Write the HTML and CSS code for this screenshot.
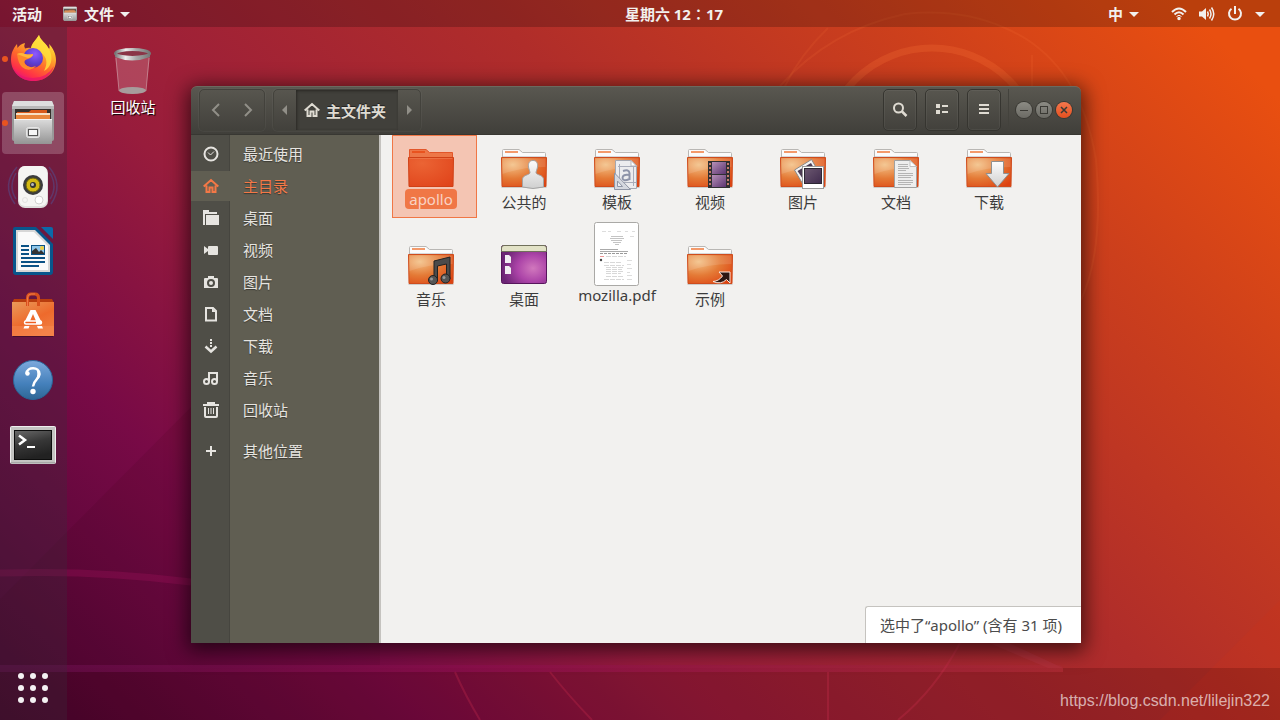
FILE: index.html
```html
<!DOCTYPE html>
<html lang="zh-CN">
<head>
    <meta charset="utf-8">
    <meta name="viewport" content="width=device-width, initial-scale=1">
    <title>主文件夹</title>
    <link rel="stylesheet" href="styles.css">
</head>
<body>
    <!-- Wallpaper lines -->
    <svg class="wallpaper" viewBox="0 0 1280 720" preserveAspectRatio="none" aria-hidden="true">
        <defs>
            <linearGradient id="band" x1="0" x2="1">
                <stop offset="0" stop-color="#5f0c46"/>
                <stop offset=".45" stop-color="#8d0f4e"/>
                <stop offset="1" stop-color="#ad2b34"/>
            </linearGradient>
        </defs>
        <path d="M380 217L-120 720H1280V668H380Z" fill="#200" opacity=".08"/>
        <path d="M0 668H1280V720H0Z" fill="#300" opacity=".12"/>
        <path d="M1280 600L1160 720H1280Z" fill="#f30" opacity=".06"/>
        <path d="M0 573Q100 570 191 582" fill="none" stroke="#9a1058" stroke-width="7" opacity=".35"/>
        <path d="M0 665H1060L1063 668V672H0Z" fill="url(#band)" opacity=".75"/>
        <path d="M985 632L1063 668H1048L975 637Z" fill="#b0303a" opacity=".8"/>
        <g fill="none" stroke="#ff7a3a">
            <circle cx="932" cy="157" r="109" stroke-width="7" opacity=".22"/>
            <path d="M780 86Q830 30 905 14Q960 8 1005 28Q1080 60 1096 160Q1104 250 1081 300" stroke-width="2" opacity=".13"/>
            <path d="M828 28Q800 55 785 86M1032 55V86" stroke-width="2" opacity=".12"/>
        </g>
        <g fill="none" stroke="#d03050" stroke-width="2" opacity=".28">
            <path d="M960 643Q935 690 898 720"/>
            <path d="M455 672Q465 695 480 720M550 672Q568 695 592 720"/>
            <path d="M828 672V720"/>
        </g>
    </svg>

    <!-- Shared folder artwork -->
    <svg class="defs" width="0" height="0" aria-hidden="true">
        <defs>
            <radialGradient id="folderFront" cx=".25" cy=".25" r=".95">
                <stop offset="0" stop-color="#f3c085"/>
                <stop offset=".5" stop-color="#e47a36"/>
                <stop offset="1" stop-color="#dd4211"/>
            </radialGradient>
            <radialGradient id="folderSelected" cx=".3" cy=".2" r="1">
                <stop offset="0" stop-color="#eb6434"/>
                <stop offset="1" stop-color="#e0431a"/>
            </radialGradient>
            <linearGradient id="paper" x1="0" y1="0" x2="0" y2="1">
                <stop offset="0" stop-color="#fdfdfd"/>
                <stop offset="1" stop-color="#cfcfcf"/>
            </linearGradient>
            <linearGradient id="metal" x1="0" y1="0" x2="0" y2="1">
                <stop offset="0" stop-color="#dcdcdc"/>
                <stop offset=".5" stop-color="#b8b8b8"/>
                <stop offset="1" stop-color="#949494"/>
            </linearGradient>
            <linearGradient id="film" x1="0" y1="0" x2="1" y2="1">
                <stop offset="0" stop-color="#b690b8"/>
                <stop offset="1" stop-color="#5b3470"/>
            </linearGradient>
            <symbol id="folder" viewBox="0 0 48 42">
                <path d="M1.500 41.500h45" stroke="#000" stroke-width="2" opacity=".15"/>
                <path d="M2.500 14V4.500Q2.500 3.500 3.500 3.500H19L22.500 6.500H44.500Q45.500 6.500 45.500 7.500V14Z" fill="#fbfbfb" stroke="#b9b7b4"/>
                <path d="M3 10.500H45" stroke="#d6d8da"/>
                <rect x="5" y="5" width="13" height="2" fill="#f39a6b"/>
                <path d="M1.500 11.500H46.500L46 40.500H2Z" fill="url(#folderFront)" stroke="#cf4c1d"/>
                <path d="M2.500 12.500H45.500V21Q22 21 2.500 28Z" fill="#fff" opacity=".12"/>
            </symbol>
            <symbol id="home" viewBox="0 0 16 16">
                <path d="M0.700 8.500L8 2L15.300 8.500M3.500 7.500V14H6.500V9.500H9.500V14H12.500V7.500" fill="none" stroke="currentColor" stroke-width="2"/>
            </symbol>
            <symbol id="cabinet" viewBox="0 0 48 48">
                <path d="M5 2H43L45 7V40Q45 42 43 42H5Q3 42 3 40V7Z" fill="#999"/>
                <path d="M5 2H43L45 7H3Z" fill="#dedede"/>
                <rect x="3" y="7" width="42" height="3" fill="#b8b8b8"/>
                <rect x="6" y="10" width="36" height="10" fill="#35302c"/>
                <path d="M8 13H20L22 11H38V14H8Z" fill="#d95b1b"/>
                <rect x="7" y="14" width="34" height="3" fill="#f7e0c4"/>
                <rect x="7" y="16" width="34" height="4" fill="#e9873c"/>
                <rect x="5" y="20" width="38" height="25" rx="1" fill="url(#metal)"/>
                <path d="M5 20.500H43" stroke="#f4f4f4"/>
                <rect x="17.500" y="28.500" width="13" height="10" rx="2" fill="#ccc" stroke="#e6e6e6"/>
                <rect x="19.500" y="30.500" width="9" height="6" fill="#f5f5f5" stroke="#555"/>
            </symbol>
        </defs>
    </svg>

    <!-- Top bar -->
    <header class="topbar">
        <div class="topbar-side">
            <button class="topbar-item" type="button">活动</button>
            <button class="topbar-item app-menu" type="button">
                <svg width="16" height="16"><use href="#cabinet"/></svg>
                文件
                <span class="caret"></span>
            </button>
        </div>
        <button class="topbar-item clock" type="button">星期六 12∶17</button>
        <div class="topbar-side topbar-right">
            <button class="topbar-item input-menu" type="button">中 <span class="caret"></span></button>
            <button class="topbar-item system-menu" type="button" aria-label="系统菜单">
                <svg width="16" height="16" viewBox="0 0 16 16" fill="none" stroke="#f2f0ee" stroke-width="2">
                    <path d="M1 6Q8 -1 15 6"/><path d="M3.500 8.500Q8 4 12.500 8.500"/><path d="M5.500 10.500Q8 8 10.500 10.500" stroke-width="1"/>
                    <circle cx="8" cy="12.500" r="1" fill="#f2f0ee" stroke-width="1.500"/>
                </svg>
                <svg width="16" height="16" viewBox="0 0 16 16" fill="none" stroke="#f2f0ee" stroke-width="1.500">
                    <path d="M0 5.500H3L7 2V14L3 10.500H0Z" fill="#f2f0ee" stroke="none"/>
                    <path d="M8.500 5.500Q10 8 8.500 10.500M10.500 3.500Q13.500 8 10.500 12.500M12.500 1.500Q17 8 12.500 14.500"/>
                </svg>
                <svg width="16" height="16" viewBox="0 0 16 16" fill="none" stroke="#f2f0ee" stroke-width="2">
                    <path d="M4.500 2.700A6 6 0 1 0 11.500 2.700M8 0V8"/>
                </svg>
                <span class="caret"></span>
            </button>
        </div>
    </header>

    <div class="desktop">
        <!-- Dock -->
        <nav class="dock" aria-label="Dock">
            <button class="dock-item running" type="button" aria-label="Firefox">
                <svg width="48" height="48" viewBox="0 0 48 48">
                    <defs>
                        <linearGradient id="ff" x1=".85" y1="0" x2=".3" y2="1">
                            <stop offset="0" stop-color="#fff44f"/>
                            <stop offset=".3" stop-color="#ffbd2b"/>
                            <stop offset=".6" stop-color="#ff6a2b"/>
                            <stop offset=".85" stop-color="#ff3048"/>
                            <stop offset="1" stop-color="#e5157b"/>
                        </linearGradient>
                        <radialGradient id="ffGlobe" cx=".6" cy=".3" r=".8">
                            <stop offset="0" stop-color="#9059ff"/>
                            <stop offset=".6" stop-color="#5b3fd0"/>
                            <stop offset="1" stop-color="#722291"/>
                        </radialGradient>
                    </defs>
                    <path d="M30 0C31 5 37 8 40 14C41 13 40.500 11 40 9C44 13 47 19 47 25C47 37 37 46 24.500 46C12 46 2 37 2 24.500C2 18 4 14 8 9L8.500 13Q11 9 16 8Q14.500 11 16 13.500Q19 12.500 22 13C23 8 27 5 30 0Z" fill="url(#ff)"/>
                    <path d="M30 0C31 5 37 8 40 14C45 23 42 33 35 36C39 28 38 22 32 18C28 15 23 15 22 13C23 8 27 5 30 0Z" fill="#ffe23d" opacity=".8"/>
                    <circle cx="24" cy="23" r="10" fill="url(#ffGlobe)"/>
                    <path d="M8 19Q12 17 16 19Q20 20 24 19Q24 22 19 24Q14 25 16 29Q20 34 27 31Q20 38 13 32Q9 28 8 19Z" fill="#ff8a2a"/>
                    <path d="M8 19Q12 17 16 19Q20 20 24 19Q24 22 19 23Q13 21 8 19Z" fill="#ffb83a"/>
                    <path d="M3 30Q8 43 24 43Q38 43 45 31Q40 46 24.500 46Q8 46 3 30Z" fill="#e8146c" opacity=".7"/>
                </svg>
            </button>
            <button class="dock-item running active" type="button" aria-label="文件">
                <svg width="48" height="48"><use href="#cabinet"/></svg>
            </button>
            <button class="dock-item" type="button" aria-label="Rhythmbox">
                <svg width="48" height="48" viewBox="0 0 48 48">
                    <g fill="none" stroke="#4a5fa8" stroke-width="1.500" opacity=".4">
                        <path d="M8 4Q-8 22 6 41M7 10Q-1 24 7 36M40 4Q55 22 42 41M41 10Q49 24 41 36"/>
                    </g>
                    <rect x="9" y="3" width="30" height="42" rx="7" fill="#dededc"/>
                    <rect x="10" y="3" width="28" height="40" rx="6" fill="#f5f5f3"/>
                    <circle cx="24" cy="22" r="10" fill="#3b3c3d"/>
                    <circle cx="24" cy="22" r="7" fill="#d3b913" stroke="#66600f"/>
                    <circle cx="24" cy="22" r="3" fill="#333"/>
                    <circle cx="23.500" cy="21.500" r="1.500" fill="#bbb"/>
                    <circle cx="30" cy="37" r="4" fill="#fff" stroke="#d2d2d0"/>
                    <circle cx="16" cy="37" r="2.500" fill="none" stroke="#e2e2e0"/>
                </svg>
            </button>
            <button class="dock-item" type="button" aria-label="LibreOffice Writer">
                <svg width="48" height="48" viewBox="0 0 48 48">
                    <path d="M32 0H42Q44 0 44 2V12Z" fill="#0b6aa8"/>
                    <path d="M6 0H27L44 17V45Q44 48 41 48H7Q4 48 4 45V2Q4 0 6 0Z" fill="#08568c"/>
                    <path d="M7 3H26L41 18V45H7Z" fill="#d7d7d7"/>
                    <path d="M9 5H25L39 19V43H9Z" fill="#fafafa"/>
                    <path d="M12 19H20M12 23H20M12 27H20M12 31H36M12 35H36M12 39H30" stroke="#0b5285" stroke-width="2"/>
                    <rect x="22" y="18" width="14" height="10" fill="#0b5285"/>
                    <rect x="23" y="19" width="12" height="8" fill="#8fc7ea"/>
                    <circle cx="33" cy="21" r="2" fill="#f0cf3e"/>
                    <path d="M23 27V24L27 21L30 25L32 23L35 26V27Z" fill="#333"/>
                </svg>
            </button>
            <button class="dock-item" type="button" aria-label="Ubuntu 软件">
                <svg width="48" height="48" viewBox="0 0 48 48">
                    <defs>
                        <linearGradient id="bag" x1="0" y1="0" x2=".6" y2="1">
                            <stop offset="0" stop-color="#e99a5a"/>
                            <stop offset=".6" stop-color="#ee6a2c"/>
                            <stop offset="1" stop-color="#f07c40"/>
                        </linearGradient>
                    </defs>
                    <path d="M5 8H43L45 12H3Z" fill="#b83c0e"/>
                    <path d="M3 11H45V45H3Z" fill="url(#bag)"/>
                    <path d="M3 35H45V45H3Z" fill="#f58a52" opacity=".5"/>
                    <path d="M4 45.500H44" stroke="#000" opacity=".3"/>
                    <path d="M18.500 15V7Q18.500 3 22 3H26Q29.500 3 29.500 7V15" fill="none" stroke="#d9501c" stroke-width="3"/>
                    <path d="M18.500 15V7Q18.500 3 22 3H26" fill="none" stroke="#ef7b47" stroke-width="1"/>
                    <path d="M21.500 19H26.500L32 30H27L24 23L21 30H16Z" fill="#fff"/>
                    <rect x="15.500" y="30" width="17" height="3" rx="1.500" fill="#ef5d20" stroke="#fff" stroke-width="1.500"/>
                    <path d="M27 31.500H32.500" stroke="#fff" stroke-width="3"/>
                    <path d="M15.500 35H20.500L19.500 37.500H14.500ZM28 35H33L34 37.500H29Z" fill="#fff"/>
                </svg>
            </button>
            <button class="dock-item" type="button" aria-label="帮助">
                <svg width="48" height="48" viewBox="0 0 48 48">
                    <defs>
                        <linearGradient id="help" x1="0" y1="0" x2="0" y2="1">
                            <stop offset="0" stop-color="#7da9dc"/>
                            <stop offset=".6" stop-color="#4480bb"/>
                            <stop offset="1" stop-color="#2e6795"/>
                        </linearGradient>
                    </defs>
                    <circle cx="24" cy="26" r="19" fill="#000" opacity=".2"/>
                    <circle cx="24" cy="25" r="19.500" fill="url(#help)" stroke="#2a6598"/>
                    <path d="M17.500 18.500C18 11.500 30.500 11.500 30.500 19C30.500 24 24.500 25 24 31.500" fill="none" stroke="#fff" stroke-width="2.500"/>
                    <path d="M29 15Q33 19 30 23L26 27Q29 21 28 16Z" fill="#fff"/>
                    <circle cx="18.500" cy="18.500" r="2.200" fill="#fff"/>
                    <circle cx="24" cy="36.500" r="2.700" fill="#fff"/>
                </svg>
            </button>
            <button class="dock-item" type="button" aria-label="终端">
                <svg width="48" height="48" viewBox="0 0 48 48">
                    <defs>
                        <linearGradient id="term" x1="0" y1="0" x2=".3" y2="1">
                            <stop offset="0" stop-color="#686868"/>
                            <stop offset=".5" stop-color="#383838"/>
                            <stop offset="1" stop-color="#222"/>
                        </linearGradient>
                    </defs>
                    <rect x="1.500" y="7.500" width="45" height="37" rx="1" fill="#c4c4c2" stroke="#eee"/>
                    <path d="M2 44H46" stroke="#8d8d8d"/>
                    <rect x="5" y="11" width="38" height="30" fill="#0d0d0d"/>
                    <rect x="6" y="12" width="36" height="28" fill="url(#term)"/>
                    <path d="M10 16.500L16 21L10 25.500" fill="none" stroke="#fff" stroke-width="2.500"/>
                    <path d="M18 28H26" stroke="#fff" stroke-width="2"/>
                </svg>
            </button>
            <button class="dock-item show-apps" type="button" aria-label="显示应用程序">
                <svg width="48" height="48" viewBox="0 0 48 48" fill="#f4f1f3">
                    <circle cx="12" cy="12" r="3"/><circle cx="24" cy="12" r="3"/><circle cx="36" cy="12" r="3"/>
                    <circle cx="12" cy="24" r="3"/><circle cx="24" cy="24" r="3"/><circle cx="36" cy="24" r="3"/>
                    <circle cx="12" cy="36" r="3"/><circle cx="24" cy="36" r="3"/><circle cx="36" cy="36" r="3"/>
                </svg>
            </button>
        </nav>

        <main class="workspace">
            <button class="desktop-icon" type="button">
                <svg width="48" height="48" viewBox="0 0 48 48">
                    <defs>
                        <linearGradient id="rim" x1="0" x2="1">
                            <stop offset="0" stop-color="#777"/>
                            <stop offset=".3" stop-color="#eee"/>
                            <stop offset=".6" stop-color="#aaa"/>
                            <stop offset="1" stop-color="#777"/>
                        </linearGradient>
                    </defs>
                    <path d="M6 8H41L37 43Q24 48 10 43Z" fill="#e8b0bb" opacity=".26"/>
                    <path d="M7 10L10 43M40 10L37 43" stroke="#d8b9be" stroke-width="1" opacity=".5"/>
                    <ellipse cx="23.500" cy="42.500" rx="13.500" ry="3.500" fill="#a79c9c"/>
                    <ellipse cx="23.500" cy="5.500" rx="17" ry="4" fill="#8a3547" stroke="url(#rim)" stroke-width="3"/>
                    <path d="M6 6V9Q23 16 41 9V6Q23 13 6 6Z" fill="url(#rim)"/>
                </svg>
                <span>回收站</span>
            </button>

            <!-- File manager window -->
            <section class="window">
                <div class="titlebar">
                    <div class="group nav-group">
                        <button type="button" aria-label="后退"><svg width="16" height="16" viewBox="0 0 16 16"><path d="M11 2L5 8L11 14" fill="none" stroke="currentColor" stroke-width="2"/></svg></button>
                        <button type="button" aria-label="前进"><svg width="16" height="16" viewBox="0 0 16 16"><path d="M5 2L11 8L5 14" fill="none" stroke="currentColor" stroke-width="2"/></svg></button>
                    </div>
                    <div class="group path-bar">
                        <button class="path-arrow" type="button" aria-label="向左"><svg width="8" height="10" viewBox="0 0 8 10"><path d="M6 0V10L1 5Z" fill="currentColor"/></svg></button>
                        <button class="path-current" type="button"><svg width="16" height="16"><use href="#home"/></svg>主文件夹</button>
                        <button class="path-arrow" type="button" aria-label="向右"><svg width="8" height="10" viewBox="0 0 8 10"><path d="M2 0V10L7 5Z" fill="currentColor"/></svg></button>
                    </div>
                    <div class="actions">
                        <button class="tool" type="button" aria-label="搜索"><svg width="16" height="16" viewBox="0 0 16 16" fill="none" stroke="currentColor"><circle cx="6.500" cy="6" r="4.500" stroke-width="2"/><path d="M10 9.500L14.500 14" stroke-width="2.500"/></svg></button>
                        <button class="tool" type="button" aria-label="视图"><svg width="16" height="16" viewBox="0 0 16 16" fill="currentColor"><path d="M2 2H6V6H2ZM2 8H6V12H2ZM8 3H14V5H8ZM8 9H14V11H8Z"/></svg></button>
                        <button class="tool" type="button" aria-label="菜单"><svg width="16" height="16" viewBox="0 0 16 16" fill="currentColor"><path d="M3 2H13V4H3ZM3 6H13V8H3ZM3 10H13V12H3Z"/></svg></button>
                    </div>
                    <div class="window-controls">
                        <button type="button" aria-label="最小化"><svg width="16" height="16" viewBox="0 0 16 16"><path d="M4 8.500H12" stroke="currentColor"/></svg></button>
                        <button type="button" aria-label="最大化"><svg width="16" height="16" viewBox="0 0 16 16"><rect x="4.500" y="4.500" width="7" height="7" fill="none" stroke="currentColor"/></svg></button>
                        <button class="close" type="button" aria-label="关闭"><svg width="16" height="16" viewBox="0 0 16 16"><path d="M5 5L11 11M11 5L5 11" stroke="currentColor" stroke-width="1.500"/></svg></button>
                    </div>
                </div>

                <div class="window-body">
                    <nav class="sidebar" aria-label="位置">
                        <a href="#"><svg width="16" height="16" viewBox="0 0 16 16"><circle cx="8" cy="8" r="6.500" fill="none" stroke="currentColor" stroke-width="2"/><path d="M5 6.500L7.500 9L11 5.500" fill="none" stroke="currentColor" stroke-width="1"/></svg><span>最近使用</span></a>
                        <a href="#" class="current"><svg width="16" height="16"><use href="#home"/></svg><span>主目录</span></a>
                        <a href="#"><svg width="16" height="16" viewBox="0 0 16 16" fill="currentColor"><path d="M0 0H6V2H14V4H2V15H0ZM3 5H16V15H3Z"/></svg><span>桌面</span></a>
                        <a href="#"><svg width="16" height="16" viewBox="0 0 16 16" fill="currentColor"><path d="M1 4L5 7V9L1 12Z"/><rect x="5" y="4" width="10" height="9" rx="1"/></svg><span>视频</span></a>
                        <a href="#"><svg width="16" height="16" viewBox="0 0 16 16" fill="currentColor"><path fill-rule="evenodd" d="M5 2H11V4H14Q15 4 15 5V14H1V5Q1 4 2 4H5ZM8 5A4 4 0 1 0 8 13A4 4 0 1 0 8 5Z"/><circle cx="8" cy="9" r="2"/></svg><span>图片</span></a>
                        <a href="#"><svg width="16" height="16" viewBox="0 0 16 16"><path d="M3 2H10L13 5V14.500H3Z" fill="none" stroke="currentColor" stroke-width="2"/><path d="M9 2V6H13Z" fill="currentColor"/></svg><span>文档</span></a>
                        <a href="#"><svg width="16" height="16" viewBox="0 0 16 16" fill="none" stroke="currentColor"><path d="M8 1V3M8 4V6M8 7V9" stroke-width="2"/><path d="M2.500 8.500L8 13.500L13.500 8.500" stroke-width="2.500"/></svg><span>下载</span></a>
                        <a href="#"><svg width="16" height="16" viewBox="0 0 16 16" fill="none" stroke="currentColor" stroke-width="2"><circle cx="3.500" cy="11.500" r="2.500"/><circle cx="11.500" cy="11.500" r="2.500"/><path d="M6 11V3H14V11"/></svg><span>音乐</span></a>
                        <a href="#"><svg width="16" height="16" viewBox="0 0 16 16" fill="none" stroke="currentColor"><path d="M0 3H16" stroke-width="2"/><path d="M4 1H12" stroke-width="2"/><path d="M2 5V14Q2 15 3 15H13Q14 15 14 14V5" stroke-width="2"/><path d="M5.500 6V12M8 6V12M10.500 6V12" stroke-width="1"/></svg><span>回收站</span></a>
                        <a href="#" class="other"><svg width="16" height="16" viewBox="0 0 16 16"><path d="M8 3V13M3 8H13" stroke="currentColor" stroke-width="2"/></svg><span>其他位置</span></a>
                    </nav>

                    <div class="content">
                        <div class="files">
                            <button class="file selected" type="button">
                                <svg width="48" height="42" viewBox="0 0 48 42">
                                    <path d="M2.500 14V3.500H19L22.500 6.500H45.500V14Z" fill="#ed7748" stroke="#e2562a"/>
                                    <rect x="5" y="5" width="13" height="2" fill="#e9531f"/>
                                    <path d="M1.500 11.500H46.500L46 40.500H2Z" fill="url(#folderSelected)" stroke="#cf4016"/>
                                    <path d="M2.500 12.500H45.500" stroke="#ef8055" opacity=".6"/>
                                </svg>
                                <span class="label latin">apollo</span>
                            </button>
                            <button class="file" type="button">
                                <svg width="48" height="42" viewBox="0 0 48 42">
                                    <use href="#folder"/>
                                    <path d="M33 14.500C37 14.500 38 18 37.500 21C37 24 36 25 36 27C37 29 43 29 43.500 33V41Q33 44 22.500 41V33C23 29 29 29 30 27C30 25 29 24 28.500 21C28 18 29 14.500 33 14.500Z" fill="url(#paper)" stroke="#a3a3a3"/>
                                </svg>
                                <span class="label">公共的</span>
                            </button>
                            <button class="file" type="button">
                                <svg width="48" height="42" viewBox="0 0 48 42">
                                    <use href="#folder"/>
                                    <path d="M22.500 14.500H38L43.500 20V42.500H22.500Z" fill="#ececee" stroke="#a4a7b0"/>
                                    <path d="M38 14.500V20H43.500Z" fill="#fff" stroke="#b5b7bd"/>
                                    <path d="M25 20.500H43M25 36.500H43M26.500 18V40M40.500 20V40" stroke="#a9adba"/>
                                    <path d="M30 25Q36 23 36.500 27V34M36.500 29Q29.500 28 29.500 32Q30 36 36.500 33" fill="none" stroke="#8d93a8" stroke-width="2"/>
                                    <path d="M21.500 27L37.500 43.500H21.500Z" fill="#d5d8df" stroke="#8f95a5"/>
                                    <path d="M24.500 35L29.500 40.500H24.500Z" fill="#eceef2" stroke="#8f95a5"/>
                                </svg>
                                <span class="label">模板</span>
                            </button>
                            <button class="file" type="button">
                                <svg width="48" height="42" viewBox="0 0 48 42">
                                    <use href="#folder"/>
                                    <rect x="22" y="15" width="22" height="27" fill="#2f2f31"/>
                                    <rect x="26" y="16" width="14" height="12" fill="url(#film)"/>
                                    <rect x="26" y="29" width="14" height="12" fill="url(#film)"/>
                                    <path d="M24 17V41M42 17V41" stroke="#c47b6c" stroke-width="2" stroke-dasharray="2 2"/>
                                </svg>
                                <span class="label">视频</span>
                            </button>
                            <button class="file" type="button">
                                <svg width="48" height="42" viewBox="0 0 48 42">
                                    <use href="#folder"/>
                                    <path d="M15.500 24L32.500 13.500L42 30L25 40Z" fill="#f3f3f3" stroke="#898989"/>
                                    <path d="M18.500 25L32 17L39 29L26 36Z" fill="#4c3b52"/>
                                    <rect x="23.500" y="20.500" width="21" height="22" fill="#fff" stroke="#999"/>
                                    <rect x="25" y="22" width="18" height="16" fill="#2c2733"/>
                                    <rect x="26" y="23" width="16" height="14" fill="url(#film)" opacity=".45"/>
                                </svg>
                                <span class="label">图片</span>
                            </button>
                            <button class="file" type="button">
                                <svg width="48" height="42" viewBox="0 0 48 42">
                                    <use href="#folder"/>
                                    <path d="M22.500 14.500H38L44.500 21V41.500H22.500Z" fill="#eee" stroke="#a1a1a1"/>
                                    <path d="M38 14.500V20.500H44.500Z" fill="#fff" stroke="#c2c2c2"/>
                                    <path d="M26 18.500H36M26 20.500H36M26 22.500H37M26 24.500H34M26 27.500H41M26 29.500H41M26 31.500H39M26 34.500H41M26 36.500H41M26 38.500H39" stroke="#b4b4b4"/>
                                </svg>
                                <span class="label">文档</span>
                            </button>
                            <button class="file" type="button">
                                <svg width="48" height="42" viewBox="0 0 48 42">
                                    <use href="#folder"/>
                                    <path d="M26.500 15.500H38.500V27.500H44L32.500 41L21 27.500H26.500Z" fill="url(#paper)" stroke="#909090"/>
                                </svg>
                                <span class="label">下载</span>
                            </button>
                            <button class="file" type="button">
                                <svg width="48" height="42" viewBox="0 0 48 42">
                                    <use href="#folder"/>
                                    <path d="M27 18L43 14V36H39.500V21L30.500 23V38H27Z" fill="#4b4b4b" stroke="#222"/>
                                    <circle cx="26" cy="37" r="4.500" fill="#555" stroke="#222"/>
                                    <circle cx="38.500" cy="35.500" r="4.500" fill="#555" stroke="#222"/>
                                    <circle cx="24.500" cy="36" r="1.500" fill="#999"/>
                                    <circle cx="37" cy="34.500" r="1.500" fill="#999"/>
                                </svg>
                                <span class="label">音乐</span>
                            </button>
                            <button class="file" type="button">
                                <svg width="48" height="42" viewBox="0 0 48 42">
                                    <defs>
                                        <radialGradient id="desk" cx=".7" cy=".6" r=".7">
                                            <stop offset="0" stop-color="#d178bd"/>
                                            <stop offset=".5" stop-color="#ac44a8"/>
                                            <stop offset="1" stop-color="#6b2474"/>
                                        </radialGradient>
                                    </defs>
                                    <rect x="1.500" y="2.500" width="45" height="38" rx="2" fill="url(#desk)" stroke="#57155c"/>
                                    <path d="M1.500 8.500V5Q1.500 2.500 4 2.500H44Q46.500 2.500 46.500 5V8.500Z" fill="#e2e2c6" stroke="#70705a"/>
                                    <path d="M5 12H9L11 14V20H5ZM5 23H9L11 25V31H5Z" fill="#f2eef2"/>
                                </svg>
                                <span class="label">桌面</span>
                            </button>
                            <button class="file document" type="button">
                                <svg width="46" height="64" viewBox="0 0 46 64">
                                    <rect x=".5" y=".5" width="44" height="63" rx="2" fill="#fff" stroke="#aaa9a6"/>
                                    <g fill="none" stroke="#c4c4c4" stroke-width="1">
                                        <path d="M8 9.500H12M14 9.500H17M23 9.500H27M31 9.500H34M38 9.500H41" stroke="#ddd"/>
                                        <path d="M17 14.500H29M16 16.500H30M17 18.500H28M19 20.500H27M21 22.500H25"/>
                                        <path d="M6 27.500H24M6 29.500H34" stroke="#aaa"/>
                                        <path d="M6 31.500H33" stroke="#999" stroke-dasharray="3 1"/>
                                        <path d="M6 34.500H10" stroke="#e99"/>
                                        <path d="M12 34.500H32M10 40.500H28M10 43.500H30M12 45.500H29M12 47.500H28M12 49.500H29M12 51.500H27M12 54.500H29M10 57.500H30" stroke="#d8d8d8" stroke-dasharray="5 1"/>
                                        <path d="M33 38.500H38M33 42.500H37M33 46.500H38M33 50.500H36M33 53.500H38M33 57.500H38" stroke="#ddd"/>
                                        <path d="M36 14.500H40" stroke="#ddd"/>
                                    </g>
                                    <circle cx="7" cy="38" r="1.200" fill="#444"/>
                                </svg>
                                <span class="label latin">mozilla.pdf</span>
                            </button>
                            <button class="file" type="button">
                                <svg width="48" height="42" viewBox="0 0 48 42">
                                    <use href="#folder"/>
                                    <path d="M33 29H44V40L40.500 36.500Q35 42 27 38.500Q33 38 36.500 33Z" fill="#2b1712" stroke="#fbe8df"/>
                                </svg>
                                <span class="label">示例</span>
                            </button>
                        </div>
                        <div class="status">选中了“apollo” (含有 31 项)</div>
                    </div>
                </div>
            </section>

            <p class="watermark">https://blog.csdn.net/lilejin322</p>
        </main>
    </div>
</body>
</html>
```
FILE: styles.css
```css
/* General Reset */
* {
    margin: 0;
    padding: 0;
    box-sizing: border-box;
}

body {
    font-family: "Noto Sans", "Noto Sans CJK SC", sans-serif;
    font-size: 15px;
    color: #3c3c3c;
    background: linear-gradient(45deg, #46042f 0%, #780a46 21%, #981c3c 36%, #b02d2a 60%, #cc3f1c 79%, #e94f10 95%);
    display: flex;
    flex-direction: column;
    min-height: 100vh;
    overflow: hidden;
    position: relative;
}

button {
    font: inherit;
    color: inherit;
    background: none;
    border: none;
}

svg {
    display: block;
    flex-shrink: 0;
    overflow: visible;
}

.wallpaper {
    position: absolute;
    inset: 0;
    width: 100%;
    height: 100%;
    z-index: -1;
}

.defs {
    position: absolute;
}

/* Top bar */
.topbar {
    display: grid;
    grid-template-columns: 1fr auto 1fr;
    height: 27px;
    padding: 0 15px 0 12px;
    background: rgba(0, 0, 0, 0.2);
    color: #f2f0ee;
    font-weight: 700;
}

.topbar-side {
    display: flex;
    gap: 20px;
}

.topbar-right {
    justify-content: flex-end;
    gap: 32px;
}

.topbar-item {
    display: flex;
    align-items: center;
    gap: 6px;
    line-height: 28px;
    white-space: nowrap;
}

.system-menu {
    gap: 12px;
}

.topbar .clock {
    margin-left: 71px;
}

.caret {
    border: 5px solid transparent;
    border-top-color: #f2f0ee;
    border-bottom: 0;
}

/* Desktop */
.desktop {
    display: flex;
    flex: 1;
}

.dock {
    width: 67px;
    padding: 1px 3px 1px 2px;
    display: flex;
    flex-direction: column;
    gap: 2px;
    background: rgba(60, 45, 60, 0.32);
}

.dock-item {
    display: flex;
    justify-content: center;
    align-items: center;
    width: 62px;
    height: 62px;
    border-radius: 4px;
    position: relative;
}

.dock-item.active {
    background: rgba(255, 255, 255, 0.2);
}

.dock-item.running::before {
    content: '';
    position: absolute;
    left: 0;
    top: 28px;
    width: 6px;
    height: 6px;
    border-radius: 50%;
    background: #e95420;
}

.show-apps {
    margin-top: auto;
}

.workspace {
    flex: 1;
    position: relative;
}

.desktop-icon {
    display: flex;
    flex-direction: column;
    align-items: center;
    margin: 21px 0 0 16px;
    width: 100px;
    color: #fff;
    text-shadow: 1px 1px 1px #000;
}

/* Window */
.window {
    position: absolute;
    top: 59px;
    left: 124px;
    right: 199px;
    bottom: 77px;
    display: flex;
    flex-direction: column;
    border-radius: 6px 6px 0 0;
    box-shadow: 0 4px 20px 4px rgba(0, 0, 0, 0.6);
}

.titlebar {
    display: flex;
    align-items: center;
    height: 49px;
    padding: 0 9px 1px 8px;
    background: linear-gradient(#595750, #403f3a);
    border-top: 1px solid #6b6a5f;
    border-bottom: 1px solid #383732;
    border-radius: 6px 6px 0 0;
    color: #dfdbd2;
}

.group {
    display: flex;
    height: 42px;
    border: 1px solid #43423c;
    border-radius: 5px;
    margin-right: 8px;
    box-shadow: 0 0 0 1px rgba(255, 255, 255, 0.04);
}

.group button {
    display: flex;
    align-items: center;
    justify-content: center;
}

.nav-group {
    color: #918f88;
}

.nav-group button {
    width: 32px;
}

.path-bar .path-arrow {
    width: 22px;
    color: #918f88;
}

.path-bar .path-current {
    justify-content: flex-start;
    gap: 6px;
    width: 102px;
    padding-left: 8px;
    font-weight: 700;
    background: #41403b;
    box-shadow: inset 1px 1px 3px #292824;
    text-shadow: 0 -1px 0 #222;
}

.actions {
    display: flex;
    gap: 8px;
    margin-left: auto;
    padding-right: 7px;
    border-right: 1px solid #43423c;
}

.tool {
    display: flex;
    align-items: center;
    justify-content: center;
    width: 34px;
    height: 42px;
    border: 1px solid #363530;
    border-radius: 5px;
    box-shadow: inset 0 0 0 1px rgba(255, 255, 255, 0.05);
}

.window-controls {
    display: flex;
    gap: 4px;
    margin-left: 7px;
}

.window-controls button {
    width: 16px;
    height: 16px;
    border-radius: 50%;
    color: #3a3934;
    background: linear-gradient(#8c8b84, #6b6a64);
    box-shadow: 0 0 0 1px #3a3934;
}

.window-controls .close {
    background: linear-gradient(#f5774d, #e4501f);
}

.window-body {
    display: flex;
    flex: 1;
}

/* Sidebar */
.sidebar {
    width: 190px;
    padding-top: 3px;
    background: linear-gradient(to right, #4f4e47 38px, #46453f 38px, #46453f 39px, #605e52 39px);
    border-right: 2px solid #c5c3bf;
}

.sidebar a {
    display: flex;
    align-items: center;
    gap: 24px;
    height: 30px;
    margin: 1px 0 2px;
    padding-left: 12px;
    color: #e6e4e0;
    text-decoration: none;
    text-shadow: 0 1px 1px rgba(0, 0, 0, 0.4);
}

.sidebar span {
    padding-bottom: 2px;
}

.sidebar .current {
    color: #f47846;
    background: #605e52;
}

.sidebar .other {
    margin-top: 11px;
}

/* Files */
.content {
    flex: 1;
    display: flex;
    flex-direction: column;
    justify-content: space-between;
    background: #f2f1ef;
}

.files {
    display: grid;
    grid-template-columns: repeat(auto-fill, 85px);
    gap: 4px 8px;
    align-items: end;
    padding-left: 11px;
}

.file {
    display: flex;
    flex-direction: column;
    align-items: center;
    padding: 11px 7px 3px 0;
}

.file.selected {
    padding-bottom: 9px;
    background: #f4c5b3;
    box-shadow: inset 0 0 0 1px #f07746;
}

.file.document {
    padding-top: 0;
    padding-bottom: 10px;
}

.label {
    margin-top: 1px;
    line-height: 26px;
    white-space: nowrap;
}

.label.latin {
    line-height: 20px;
}

.document .label.latin {
    margin-top: 0;
    line-height: 19px;
}

.selected .label {
    padding: 0 4px;
    border-radius: 4px;
    background: #f07746;
    color: #f9d3c4;
}

.status {
    align-self: flex-end;
    padding: 0 19px 0 14px;
    line-height: 36px;
    background: #fff;
    border: 1px solid #c5c3bf;
    border-width: 1px 0 0 1px;
    border-radius: 3px 0 0 0;
    color: #4c4c4c;
}

.watermark {
    position: absolute;
    right: 10px;
    bottom: 10px;
    font: 16px/18px "Liberation Sans", sans-serif;
    color: rgba(255, 255, 255, 0.65);
}
```
